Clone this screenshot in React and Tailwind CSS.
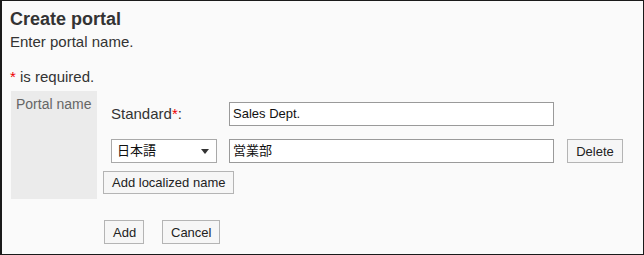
import React from "react";

function Button({ children, className = "", h = "h-[24px]" }) {
  return (
    <button
      type="button"
      className={`${h} px-[8px] border border-[#b4b4b4] bg-[#f6f6f6] text-[13px] leading-[15px] text-[#222] ${className}`}
    >
      {children}
    </button>
  );
}

export default function App() {
  return (
    <div className="w-[644px] h-[255px] border border-l-2 border-[#1a1a1a] bg-[#fafafa] pl-[8px] pt-[7px] text-[#333] font-['Arial','Liberation_Sans','Noto_Sans_CJK_JP',sans-serif]">
      <h1 className="text-[18px] leading-[22px] font-bold text-[#333]">
        Create portal
      </h1>
      <p className="mt-[2px] text-[15px] leading-[20px]">Enter portal name.</p>
      <p className="mt-[15px] text-[15px] leading-[20px]">
        <span className="text-[#e00]">*</span> is required.
      </p>

      <div className="mt-[4px] ml-[1px] flex">
        <div className="w-[86px] bg-[#ebebeb] pl-[5px] pt-[3px] text-[14px] leading-[20px] text-[#666]">
          Portal name
        </div>
        <div className="pl-[6px] pt-[11px] pb-[5px]">
          <div className="flex items-center pl-[8px]">
            <span className="w-[118px] text-[15px] leading-[20px] text-[#333]">
              Standard<span className="text-[#e00]">*</span>:
            </span>
            <div className="w-[325px] h-[24px] border border-[#9a9a9a] bg-white pl-[3px] text-[13px] leading-[22px] text-[#111]">
              Sales Dept.
            </div>
          </div>

          <div className="mt-[13px] flex items-center pl-[8px]">
            <div className="w-[106px] h-[24px] border border-[#a9a9a9] bg-white pl-[5px] pr-[7px] flex items-center justify-between text-[13px] text-[#111]">
              <span>日本語</span>
              <svg width="8" height="5" viewBox="0 0 8 5">
                <path d="M0 0H8L4 5Z" fill="#333" />
              </svg>
            </div>
            <div className="ml-[12px] w-[325px] h-[24px] border border-[#9a9a9a] bg-white pl-[3px] text-[13px] leading-[22px] text-[#111]">
              営業部
            </div>
            <Button className="ml-[13px] w-[56px]">Delete</Button>
          </div>

          <div className="mt-[7px]">
            <Button h="h-[23px]">Add localized name</Button>
          </div>
        </div>
      </div>

      <div className="mt-[21px] ml-[94px] flex gap-[18px]">
        <Button className="w-[40px]">Add</Button>
        <Button className="w-[58px]">Cancel</Button>
      </div>
    </div>
  );
}
